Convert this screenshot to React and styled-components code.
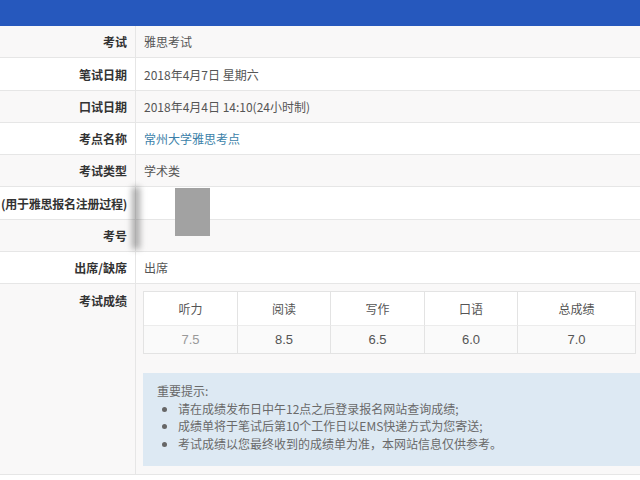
import React from 'react';
import styled, { createGlobalStyle } from 'styled-components';

const GlobalStyle = createGlobalStyle`
  html, body {
    margin: 0;
    padding: 0;
    background: #fff;
  }
  body {
    font-family: "Noto Sans CJK SC", "Noto Sans", "Liberation Sans", sans-serif;
    font-size: 12px;
    color: #555;
  }
  * {
    box-sizing: border-box;
  }
`;

const Page = styled.div`
  width: 640px;
  height: 480px;
  overflow: hidden;
  position: relative;
`;

const TopBar = styled.div`
  height: 26px;
  background: #2658bd;
  box-shadow: 0 1px 2px rgba(38, 88, 189, 0.35);
`;

const Table = styled.div`
  position: relative;
`;

const Row = styled.div`
  display: grid;
  grid-template-columns: 136px 1fr;
  min-height: ${(p) => p.$h || 32}px;
  background: ${(p) => (p.$alt ? '#f9f8f8' : '#fff')};
  border-bottom: 1px solid #e6e6e6;
`;

const Label = styled.div`
  display: flex;
  justify-content: flex-end;
  align-items: ${(p) => (p.$top ? 'flex-start' : 'center')};
  padding: ${(p) => (p.$top ? '8px 8px 0 0' : '0 8px 0 0')};
  border-right: 1px solid #e6e6e6;
  font-weight: 700;
  color: #333;
  white-space: nowrap;
  letter-spacing: ${(p) => (p.$tight ? '-0.25px' : 'normal')};
  overflow: hidden;
`;

const Value = styled.div`
  display: flex;
  flex-direction: column;
  justify-content: center;
  padding: ${(p) => (p.$pad ? '7px 4px 8px 7px' : '0 8px')};
  color: ${(p) => (p.$link ? '#3b7fa9' : '#555')};
  white-space: nowrap;
`;

const ScoreGrid = styled.div`
  display: grid;
  grid-template-columns: 94px 93px 94px 93px 1fr;
  border: 1px solid #e3e3e3;
  background: #fff;
`;

const ScoreCell = styled.div`
  height: ${(p) => (p.$head ? 34 : 27)}px;
  display: flex;
  align-items: center;
  justify-content: center;
  border-right: ${(p) => (p.$last ? 'none' : '1px solid #e3e3e3')};
  border-bottom: ${(p) => (p.$head ? '1px solid #ececec' : 'none')};
  background: ${(p) => (p.$head ? '#fff' : '#fafafa')};
  color: ${(p) => (p.$faint ? '#999' : '#555')};
  font-size: ${(p) => (p.$head ? 12 : 13)}px;
  font-family: ${(p) =>
    p.$head ? '"Noto Sans CJK SC", sans-serif' : '"Liberation Sans", "Noto Sans", sans-serif'};
`;

const Notice = styled.div`
  margin: 19px -4px 0 0;
  background: #dde9f3;
  padding: 9px 14px 14px 14px;
  color: #6a6a6a;
  line-height: 17.5px;
`;

const NoticeList = styled.ul`
  margin: 0;
  padding: 0 0 0 21px;
  list-style: disc;

  li::marker {
    color: #666;
  }
`;

const Redact = styled.div`
  position: absolute;
  left: 175px;
  top: 162px;
  width: 35px;
  height: 48px;
  background: #a2a2a2;
  filter: blur(0.6px);
`;

const Smudge = styled.div`
  position: absolute;
  left: 132px;
  top: 161px;
  width: 8px;
  height: 62px;
  background: rgba(90, 90, 90, 0.5);
  filter: blur(3px);
`;

const rows = [
  { label: '考试', value: '雅思考试' },
  { label: '笔试日期', value: '2018年4月7日 星期六', h: 33 },
  { label: '口试日期', value: '2018年4月4日 14:10(24小时制)' },
  { label: '考点名称', value: '常州大学雅思考点', link: true },
  { label: '考试类型', value: '学术类' },
  { label: '(用于雅思报名注册过程)', value: '', h: 33, tight: true },
  { label: '考号', value: '' },
  { label: '出席/缺席', value: '出席' },
];

const heads = ['听力', '阅读', '写作', '口语', '总成绩'];
const scores = ['7.5', '8.5', '6.5', '6.0', '7.0'];

const App = () => {
  return (
    <Page>
      <GlobalStyle />
      <TopBar />
      <Table>
        {rows.map((r, i) => (
          <Row key={r.label} $alt={i % 2 === 0} $h={r.h}>
            <Label $tight={r.tight}>{r.label}</Label>
            <Value $link={r.link}>{r.value}</Value>
          </Row>
        ))}
        <Row $alt>
          <Label $top>考试成绩</Label>
          <Value $pad>
            <ScoreGrid>
              {heads.map((h, i) => (
                <ScoreCell key={h} $head $last={i === 4}>
                  {h}
                </ScoreCell>
              ))}
              {scores.map((s, i) => (
                <ScoreCell key={i} $last={i === 4} $faint={i === 0}>
                  {s}
                </ScoreCell>
              ))}
            </ScoreGrid>
            <Notice>
              重要提示:
              <NoticeList>
                <li>请在成绩发布日中午12点之后登录报名网站查询成绩;</li>
                <li>成绩单将于笔试后第10个工作日以EMS快递方式为您寄送;</li>
                <li>考试成绩以您最终收到的成绩单为准，本网站信息仅供参考。</li>
              </NoticeList>
            </Notice>
          </Value>
        </Row>
        <Redact />
        <Smudge />
      </Table>
    </Page>
  );
};

export default App;
